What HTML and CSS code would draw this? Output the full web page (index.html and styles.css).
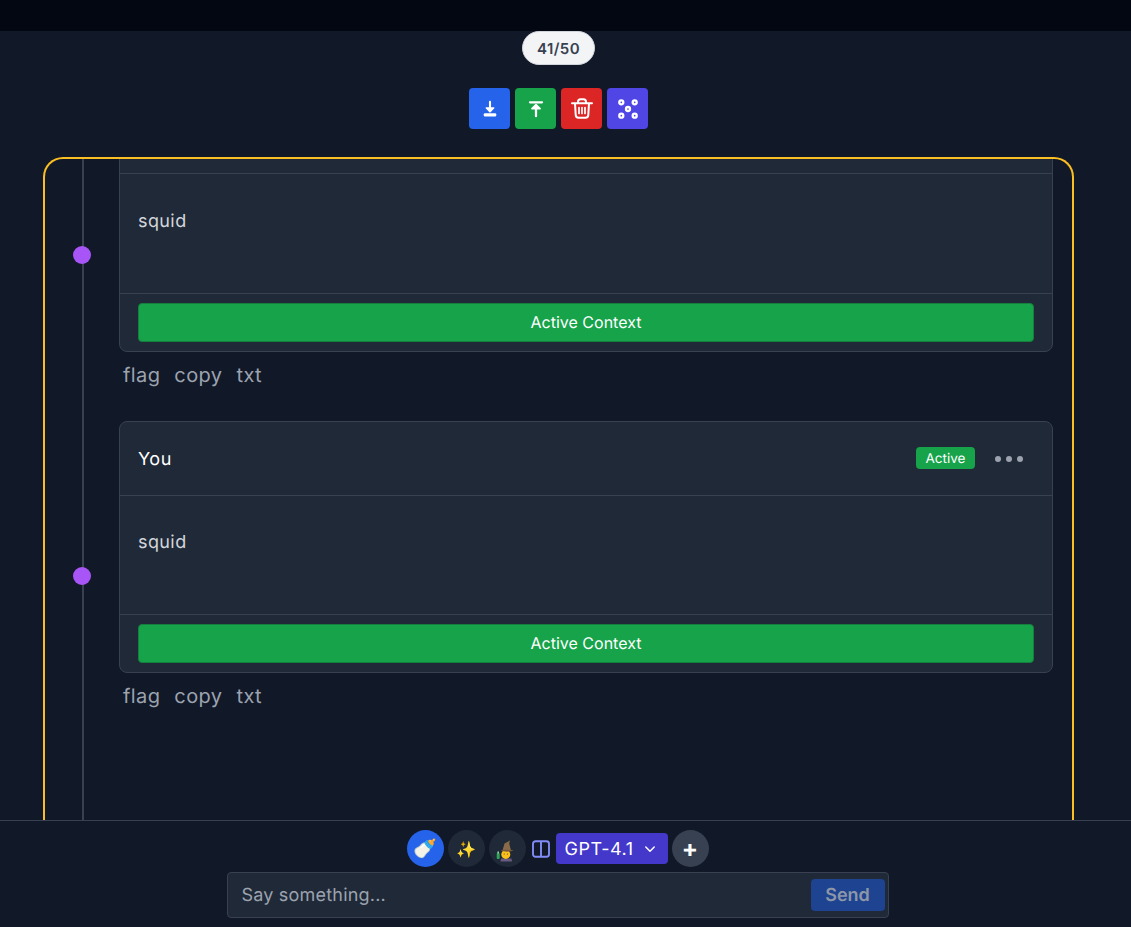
FILE: index.html
```html
<!DOCTYPE html>
<html lang="en">
<head>
<meta charset="utf-8">
<title>Chat</title>
<link rel="stylesheet" href="styles.css">
</head>
<body>
<div class="app">
  <div class="topbar"></div>
  <div class="counter-row"><span class="counter">41/50</span></div>
  <div class="tools">
    <button class="tool blue" aria-label="Download">
      <svg viewBox="0 0 24 24" width="18" height="18"><path d="M12 2.500v10" fill="none" stroke="#fff" stroke-width="2.800" stroke-linecap="round"/><path d="M6.800 10.500h10.400L12 16z" fill="#fff" stroke="#fff" stroke-width="1.500" stroke-linejoin="round"/><rect x="3.700" y="17.600" width="16.600" height="4.400" rx="1.500" fill="#fff"/></svg>
    </button>
    <button class="tool green" aria-label="Upload">
      <svg viewBox="0 0 24 24" width="18" height="18"><path d="M4 3h16M12 21.500V7" fill="none" stroke="#fff" stroke-width="3" stroke-linecap="round"/><path d="M6.500 11.500 12 6l5.500 5.500z" fill="#fff" stroke="#fff" stroke-width="2" stroke-linejoin="round"/></svg>
    </button>
    <button class="tool red" aria-label="Delete">
      <svg viewBox="0 0 24 24" width="24" height="24"><path d="M2 6.200h20M8 6V4.700a2.500 2.500 0 0 1 2.500-2.500h3A2.500 2.500 0 0 1 16 4.700V6M5 6.200l.7 11.600a3 3 0 0 0 3 3h6.600a3 3 0 0 0 3-3L19 6.200" fill="none" stroke="#fff" stroke-width="2" stroke-linecap="round" stroke-linejoin="round"/><path d="M9 10.500v6M12 10.500v6M15 10.500v6" fill="none" stroke="#fff" stroke-width="1.700" stroke-linecap="round"/></svg>
    </button>
    <button class="tool indigo" aria-label="Focus">
      <svg viewBox="0 0 24 24" width="24" height="24" fill="none" stroke="#fff" stroke-width="2.300"><circle cx="5.300" cy="5.300" r="2"/><circle cx="18.700" cy="5.300" r="2"/><circle cx="12" cy="12" r="2"/><circle cx="5.300" cy="18.700" r="2"/><circle cx="18.700" cy="18.700" r="2"/></svg>
    </button>
  </div>
  <main class="panel">
    <div class="rail"></div>
    <div class="list">
      <article class="entry">
        <span class="dot"></span>
        <div class="card">
          <div class="card-head"></div>
          <div class="card-body">squid</div>
          <div class="card-foot"><button class="ctx">Active Context</button></div>
        </div>
        <div class="actions"><span>flag</span><span>copy</span><span>txt</span></div>
      </article>
      <article class="entry">
        <span class="dot"></span>
        <div class="card">
          <header class="card-head">
            <span class="who">You</span>
            <span class="badge">Active</span>
            <span class="more"><i></i><i></i><i></i></span>
          </header>
          <div class="card-body">squid</div>
          <div class="card-foot"><button class="ctx">Active Context</button></div>
        </div>
        <div class="actions"><span>flag</span><span>copy</span><span>txt</span></div>
      </article>
    </div>
  </main>
  <footer class="composer">
    <div class="composer-tools">
      <span class="round active">🍼</span>
      <span class="round">✨</span>
      <span class="round">
        <svg viewBox="0 0 26 26" width="26" height="26">
          <path d="M6.500 25.500 7 22.500h10.500l.5 3z" fill="#6a5a80"/>
          <rect x="2.700" y="17" width="3" height="6" rx="1" fill="#2fa45a"/>
          <rect x="3.400" y="15.500" width="1.600" height="2" fill="#8fd8a0"/>
          <circle cx="11.800" cy="18.400" r="4.500" fill="#fcc21b"/>
          <circle cx="10.200" cy="18" r=".6" fill="#5d4037"/>
          <circle cx="13.400" cy="18" r=".6" fill="#5d4037"/>
          <path d="M8.500 14.500 10.500 7.500 16 4.500l-.8 3 1.800 7z" fill="#8a6a48"/>
          <path d="M6.500 14.800c3-1.300 10-1.300 13 0-3 1.100-10 1.100-13 0z" fill="#7a5a3a"/>
        </svg>
      </span>
      <svg class="split" viewBox="0 0 18 18" width="18" height="18" fill="none" stroke="#818cf8" stroke-width="1.900"><rect x="1" y="1.200" width="16" height="15.600" rx="2.500"/><path d="M9 1.200v15.600"/></svg>
      <span class="model"><span class="model-name">GPT-4.1</span>
        <svg viewBox="0 0 12 12" width="12" height="12" fill="none" stroke="#fff" stroke-width="1.500" stroke-linecap="round" stroke-linejoin="round"><path d="M1.800 4 6 8.200 10.200 4"/></svg>
      </span>
      <span class="round plus">+</span>
    </div>
    <div class="input-box">
      <span class="placeholder">Say something...</span>
      <button class="send">Send</button>
    </div>
  </footer>
</div>
</body>
</html>
```

FILE: styles.css
```css
* { box-sizing: border-box; }
html, body { margin: 0; height: 100%; }
body {
  background: #111827;
  font-family: Inter, "Noto Sans", sans-serif;
  color: #d1d5db;
  overflow: hidden;
  text-rendering: geometricPrecision;
}
button { font-family: inherit; border: 0; padding: 0; text-rendering: inherit; }
.app { height: 927px; display: flex; flex-direction: column; }
.topbar { height: 31px; background: #030712; flex: none; }
.counter-row { display: flex; justify-content: center; flex: none; padding-right: 14px; }
.counter {
  width: 73px; height: 34px;
  display: flex; align-items: center; justify-content: center;
  background: #f3f4f6;
  border: 1px solid #d1d5db;
  border-radius: 17px;
  color: #374151;
  font-size: 15px; font-weight: 600; letter-spacing: .4px;
}
.tools { display: flex; justify-content: center; gap: 5px; margin-top: 23px; flex: none; padding-right: 14px; }
.tool {
  width: 41px; height: 41px; border-radius: 4px;
  display: flex; align-items: center; justify-content: center;
}
.blue { background: #2563eb; }
.green { background: #16a34a; }
.red { background: #dc2626; }
.indigo { background: #4f46e5; }
.panel {
  position: relative;
  flex: 1; min-height: 0;
  margin: 28px 57px 0 43px;
  border: 2px solid #fbbf24;
  border-bottom: 0;
  border-radius: 20px 20px 0 0;
  overflow: hidden;
}
.rail {
  position: absolute; left: 37px; top: 0; bottom: 0;
  width: 2px; background: #374151;
}
.list { margin-top: -59.4px; padding-left: 74px; padding-right: 19px; display: flex; flex-direction: column; gap: 25.9px; }
.entry { position: relative; }
.dot {
  position: absolute; left: -46px; top: 146.6px;
  width: 18px; height: 18px; border-radius: 50%;
  background: #a855f7;
}
.card {
  background: #1f2937;
  border: 1px solid #374151;
  border-radius: 8px;
}
.card-head {
  height: 73.8px; padding: 0 19px 0 18px;
  display: flex; align-items: center;
  border-bottom: 1px solid #374151;
}
.who { color: #fff; font-size: 18px; font-weight: 400; letter-spacing: .5px; margin-top: 2px; margin-right: auto; }
.badge {
  width: 59px; text-align: center;
  background: #16a34a; color: #fff;
  font-size: 13.5px; line-height: 24px; height: 22px;
  border-radius: 4px;
  margin-top: -1px;
}
.more { display: flex; gap: 5px; margin: 2px 10px 0 20px; }
.more i { width: 6px; height: 6px; border-radius: 50%; background: #9ca3af; }
.card-body {
  height: 119.6px; padding: 36.4px 18px 0;
  font-size: 18px; line-height: 22px; letter-spacing: .4px; color: #d1d5db;
  border-bottom: 1px solid #374151;
}
.card-foot { height: 57px; padding: 9px 18px 0; }
.ctx {
  display: block; width: 100%; height: 39px;
  padding-bottom: 2px;
  background: #16a34a; color: #fff;
  border: 1px solid #15803d; border-radius: 4px;
  font-size: 16px;
}
.actions {
  display: flex; gap: 14px;
  padding: 11px 0 0 4px; height: 43px;
  font-size: 20px; line-height: 24px; letter-spacing: .4px; color: #9ca3af;
}
.composer {
  flex: none; height: 107px;
  border-top: 1px solid #374151;
  background: #111827;
  display: flex; flex-direction: column; align-items: center;
  padding: 9px 16px 0 0;
}
.composer-tools { display: flex; align-items: center; gap: 4px; height: 37px; }
.round {
  width: 37px; height: 37px; border-radius: 50%;
  background: #1f2937;
  display: flex; align-items: center; justify-content: center;
  font-size: 16px;
}
.round.active { background: #2563eb; font-size: 19px; }
.round.plus { background: #374151; color: #fff; font-size: 24px; font-weight: 700; }
.split { margin: 0 2px; }
.model {
  width: 112px; height: 31px;
  display: flex; align-items: center; gap: 11px;
  padding-left: 9px;
  background: #4338ca; color: #fff;
  border-radius: 4px;
  font-size: 18px; font-weight: 400; letter-spacing: .5px;
}
.model-name { padding-top: 1px; }
.input-box {
  width: 662px; height: 46px; margin-top: 5px;
  display: flex; align-items: center; justify-content: space-between;
  background: #1f2937;
  border: 1px solid #374151; border-radius: 4px;
  padding: 0 3px 0 14px;
}
.placeholder { font-size: 18px; letter-spacing: .2px; line-height: 20px; padding-top: 2px; color: #9ca3af; }
.send {
  width: 74px; height: 32px;
  background: #1e4391; color: #8d97a8;
  border-radius: 4px;
  font-size: 18px; font-weight: 600;
}
```
